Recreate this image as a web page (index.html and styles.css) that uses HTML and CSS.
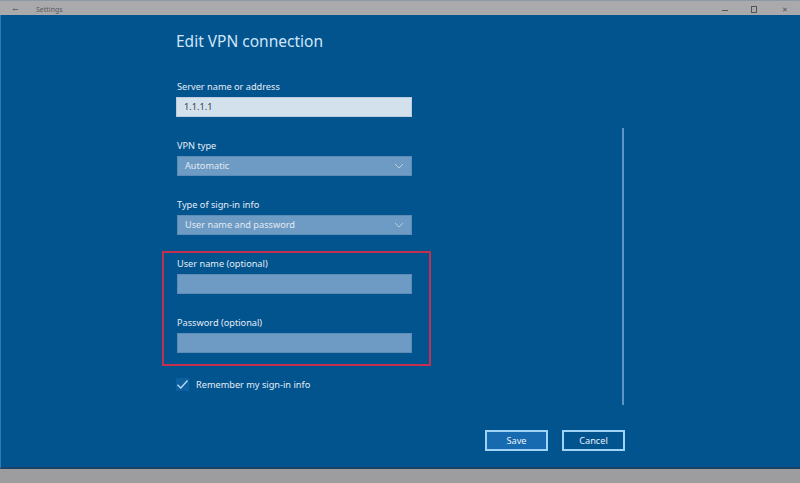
FILE: index.html
```html
<!DOCTYPE html>
<html lang="en">
<head>
    <meta charset="UTF-8">
    <title>Settings</title>
    <link rel="stylesheet" href="styles.css">
</head>
<body>
    <div class="titlebar">
        <div class="titlebar-left">
            <span class="back-arrow">&#8592;</span>
            <span class="app-name">Settings</span>
        </div>
        <div class="window-controls">
            <span class="ctrl-min"></span>
            <span class="ctrl-max"></span>
            <span class="ctrl-close">&#10005;</span>
        </div>
    </div>
    <div class="window">
        <div class="scroll-line"></div>
        <div class="form">
            <h1 class="page-title">Edit VPN connection</h1>

            <div class="field">
                <label class="field-label">Server name or address</label>
                <div class="text-box light">1.1.1.1</div>
            </div>

            <div class="field">
                <label class="field-label">VPN type</label>
                <div class="text-box dropdown">
                    <span>Automatic</span>
                    <svg class="chevron" width="10" height="6" viewBox="0 0 10 6"><path d="M1 1 L5 5 L9 1" fill="none" stroke="currentColor" stroke-width="1"/></svg>
                </div>
            </div>

            <div class="field">
                <label class="field-label">Type of sign-in info</label>
                <div class="text-box dropdown">
                    <span>User name and password</span>
                    <svg class="chevron" width="10" height="6" viewBox="0 0 10 6"><path d="M1 1 L5 5 L9 1" fill="none" stroke="currentColor" stroke-width="1"/></svg>
                </div>
            </div>

            <div class="highlight-box">
                <div class="field">
                    <label class="field-label">User name (optional)</label>
                    <div class="text-box"></div>
                </div>
                <div class="field">
                    <label class="field-label">Password (optional)</label>
                    <div class="text-box"></div>
                </div>
            </div>

            <div class="remember">
                <span class="check-box">
                    <svg width="13" height="13" viewBox="0 0 13 13"><path d="M1.5 6.8 L4.8 10 L11.5 2.5" fill="none" stroke="currentColor" stroke-width="1.3"/></svg>
                </span>
                <span class="remember-text">Remember my sign-in info</span>
            </div>

            <div class="actions">
                <button class="btn btn-save">Save</button>
                <button class="btn">Cancel</button>
            </div>
        </div>
    </div>
    <div class="taskbar"></div>
</body>
</html>
```

FILE: styles.css
```css
* {
    padding: 0;
    margin: 0;
    box-sizing: border-box;
    font-family: "Noto Sans", "Open Sans", sans-serif;
}
body {
    width: 800px;
    height: 483px;
    display: flex;
    flex-direction: column;
    background: #9d9d9f;
    overflow: hidden;
}
.titlebar {
    height: 15px;
    background: #aaa9ac;
    border-top: 1px solid #8d98a6;
    display: flex;
    justify-content: space-between;
    overflow: hidden;
}
.titlebar-left {
    display: flex;
    align-items: flex-start;
}
.back-arrow {
    font-size: 9px;
    line-height: 10px;
    color: #3c3c3e;
    margin: 2px 0 0 11px;
}
.app-name {
    font-size: 7px;
    line-height: 9px;
    color: #5a5a5c;
    margin: 4px 0 0 16px;
}
.window-controls {
    display: flex;
    align-items: flex-start;
}
.ctrl-min {
    width: 6px;
    height: 1px;
    background: #555;
    margin: 9px 23px 0 0;
}
.ctrl-max {
    width: 6px;
    height: 7px;
    border: 1px solid #555;
    margin: 5px 25px 0 0;
}
.ctrl-close {
    font-size: 7px;
    line-height: 8px;
    color: #555;
    margin: 5px 12px 0 0;
}
.window {
    flex: 1;
    position: relative;
    background: #02548f;
    border-left: 1px solid #2b7bc0;
    border-bottom: 2px solid #1c4366;
}
.scroll-line {
    position: absolute;
    left: 621px;
    top: 113px;
    width: 2px;
    height: 277px;
    background: #5f95c6;
}
.form {
    padding: 16px 0 0 176px;
}
.page-title {
    font-size: 15.5px;
    font-weight: normal;
    line-height: 20px;
    color: #cfe6f8;
    margin-left: -1px;
    margin-bottom: 29px;
}
.field {
    width: 235px;
    margin-bottom: 22px;
}
.field-label {
    display: block;
    font-size: 9.2px;
    line-height: 14px;
    color: #e4edf5;
    margin-bottom: 3px;
}
.text-box {
    height: 20px;
    background: #6d9bc4;
    border: 1px solid #5d8cb6;
    font-size: 9.2px;
    line-height: 18px;
    padding: 0 7px;
    color: #e2eaf2;
    display: flex;
    justify-content: space-between;
    align-items: center;
}
.text-box.light {
    background: #d3e1ed;
    border-color: #b9cddd;
    color: #3b4148;
    margin-left: -1px;
    width: 236px;
}
.chevron {
    color: #b8cee0;
}
.highlight-box {
    width: 269px;
    margin: -6px 0 12px -15px;
    padding: 4px 0 11px 13px;
    border: 2px solid #c4304f;
}
.highlight-box .field:last-child {
    margin-bottom: 0;
}
.remember {
    display: flex;
    align-items: center;
}
.check-box {
    width: 13px;
    height: 13px;
    background: #0d5f9e;
    color: #b7def8;
    display: flex;
    margin-left: -1px;
}
.remember-text {
    font-size: 9.2px;
    color: #e4edf5;
    margin-left: 7px;
}
.actions {
    display: flex;
    gap: 14px;
    margin: 39px 0 0 308px;
}
.btn {
    width: 63px;
    height: 21px;
    background: #02548f;
    border: 2px solid #9fd4f6;
    color: #e8f1f8;
    font-size: 9.2px;
}
.btn-save {
    background: #176aaf;
}
.taskbar {
    height: 14px;
    background: #9d9d9f;
}
```
